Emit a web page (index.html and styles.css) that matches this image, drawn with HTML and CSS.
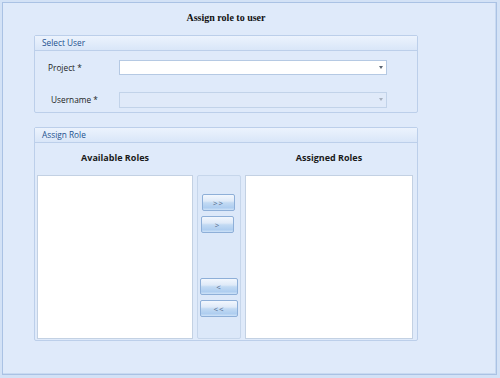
FILE: index.html
```html
<!DOCTYPE html>
<html>
<head>
<meta charset="utf-8">
<link rel="stylesheet" href="styles.css">
</head>
<body>
<div class="window">
  <div class="title">Assign role to user</div>

  <div class="group group-user">
    <div class="group-head">Select User</div>
    <div class="group-body user-body">
      <div class="label label-project">Project *</div>
      <div class="combo"><span class="arrow"></span></div>
      <div class="label label-username">Username *</div>
      <div class="combo combo-disabled"><span class="arrow"></span></div>
    </div>
  </div>

  <div class="group group-role">
    <div class="group-head">Assign Role</div>
    <div class="group-body role-body">
      <div class="col-head">Available Roles</div>
      <div></div>
      <div class="col-head">Assigned Roles</div>
      <div class="list"></div>
      <div class="mover">
        <button class="btn btn-narrow">&gt;&gt;</button>
        <button class="btn btn-narrow btn-single-right">&gt;</button>
        <button class="btn btn-wide btn-back">&lt;</button>
        <button class="btn btn-wide">&lt;&lt;</button>
      </div>
      <div class="list"></div>
    </div>
  </div>
</div>
</body>
</html>
```

FILE: styles.css
```css
html, body {
  margin: 0;
  padding: 0;
}
body {
  width: 500px;
  height: 378px;
  background: #d3e2f6;
  overflow: hidden;
  font-family: "Open Sans", "DejaVu Sans", sans-serif;
}
.window {
  box-sizing: border-box;
  margin: 2px 0 0 2px;
  width: 495px;
  height: 373px;
  border: 1px solid #aac2e4;
  box-shadow: inset -1px -1px 0 #c9daf1;
  background: #dfeafa;
  padding: 9px 0 0 31px;
}
.title {
  width: 384px;
  text-align: center;
  font-family: "Liberation Serif", "Times New Roman", serif;
  font-weight: bold;
  font-size: 10px;
  line-height: 12px;
  height: 12px;
  color: #111;
  margin-bottom: 11px;
}
.group {
  box-sizing: border-box;
  width: 384px;
  border: 1px solid #bccfea;
  border-radius: 2px;
  background: #dfeafa;
}
.group-user {
  height: 78px;
}
.group-role {
  margin-top: 14px;
  height: 214px;
}
.group-head {
  height: 14px;
  line-height: 14px;
  border-bottom: 1px solid #bccfea;
  background: linear-gradient(#ecf3fd, #d9e6f8);
  color: #23518f;
  font-size: 8.3px;
  padding-left: 7px;
}
.user-body {
  display: grid;
  grid-template-columns: 84px 268px;
  grid-template-rows: 15px 15px;
  row-gap: 17px;
  align-items: center;
  padding-top: 9px;
}
.label {
  font-size: 8.3px;
  color: #1c1c1c;
  line-height: 12px;
}
.label-project {
  margin-left: 13px;
}
.label-username {
  margin-left: 16px;
}
.combo {
  box-sizing: border-box;
  height: 15px;
  background: #fff;
  border: 1px solid #b5c9e3;
  display: flex;
  justify-content: flex-end;
  align-items: center;
  padding-right: 3px;
}
.combo-disabled {
  background: #e0eaf9;
  border-color: #c2d3e9;
  height: 16px;
}
.arrow {
  width: 0;
  height: 0;
  border-left: 2px solid transparent;
  border-right: 2px solid transparent;
  border-top: 3px solid #5a6573;
}
.combo-disabled .arrow {
  border-top-color: #a5afbd;
}
.role-body {
  display: grid;
  grid-template-columns: 156px 44px 168px;
  grid-template-rows: 12px 164px;
  column-gap: 4px;
  row-gap: 11px;
  padding: 9px 0 0 2px;
}
.col-head {
  text-align: center;
  font-weight: bold;
  font-size: 9px;
  line-height: 12px;
  color: #1a1a1a;
}
.list {
  box-sizing: border-box;
  background: #fff;
  border: 1px solid #c3d1e3;
}
.mover {
  box-sizing: border-box;
  border: 1px solid #c6d6eb;
  border-radius: 2px;
  background: #dce8f9;
  display: flex;
  flex-direction: column;
  align-items: center;
  padding-top: 18px;
}
.btn {
  box-sizing: border-box;
  height: 17px;
  padding: 0;
  margin: 0;
  border: 1px solid #8eafd8;
  border-radius: 2px;
  background: linear-gradient(#f2f7fe 0%, #dfeaf8 40%, #c2daf3 52%, #aecdf0 85%, #cfe3f8 100%);
  color: #53688a;
  font-family: "Open Sans", "DejaVu Sans", sans-serif;
  font-size: 8px;
  line-height: 14px;
  letter-spacing: 1px;
}
.btn-narrow {
  width: 33px;
  margin-right: 1px;
}
.btn-single-right {
  margin-top: 5px;
  margin-right: 3px;
}
.btn-wide {
  width: 38px;
  margin-bottom: 5px;
}
.btn-back {
  margin-top: 45px;
}
```
